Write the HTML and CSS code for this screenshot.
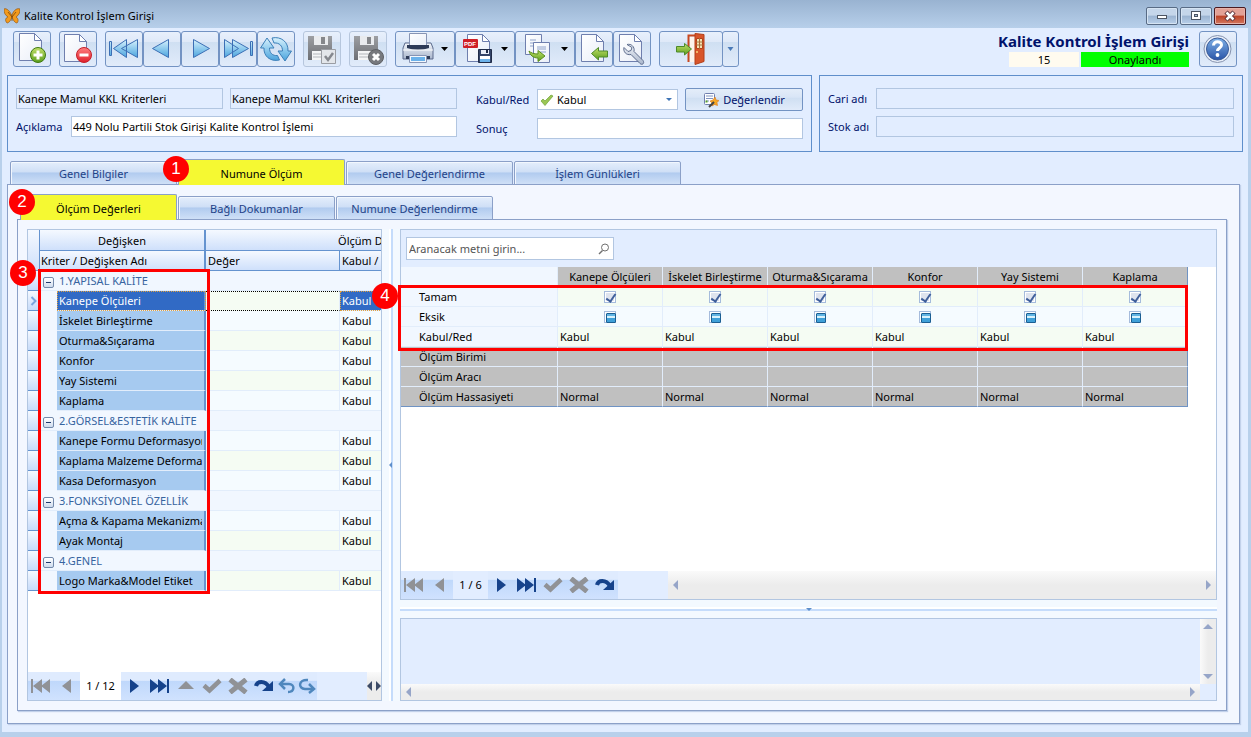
FILE: index.html
```html
<!DOCTYPE html>
<html lang="tr">
<head>
  <meta charset="UTF-8">
  <title>Kalite Kontrol İşlem Girişi</title>
  <meta name="viewport" content="width=device-width, initial-scale=1.0">
  <link rel="stylesheet" href="styles.css">
</head>
<body>

  <!-- shared gradients and symbols -->
  <svg class="defs" width="0" height="0" aria-hidden="true">
    <defs>
      <linearGradient id="g-blue" x1="0" y1="0" x2="0" y2="1"><stop offset="0" stop-color="#d8f1fc"/><stop offset=".5" stop-color="#8fcbee"/><stop offset="1" stop-color="#4ba3dc"/></linearGradient>
      <linearGradient id="g-page" x1="0" y1="0" x2="1" y2="1"><stop offset="0" stop-color="#ffffff"/><stop offset="1" stop-color="#e9eef8"/></linearGradient>
      <linearGradient id="g-green" x1="0" y1="0" x2="0" y2="1"><stop offset="0" stop-color="#c3e06a"/><stop offset="1" stop-color="#5a9e1c"/></linearGradient>
      <linearGradient id="g-red" x1="0" y1="0" x2="0" y2="1"><stop offset="0" stop-color="#ff7f7f"/><stop offset="1" stop-color="#e01f2b"/></linearGradient>
      <linearGradient id="g-gray" x1="0" y1="0" x2="0" y2="1"><stop offset="0" stop-color="#9d9fa3"/><stop offset="1" stop-color="#6d6f74"/></linearGradient>
      <linearGradient id="g-steel" x1="0" y1="0" x2="0" y2="1"><stop offset="0" stop-color="#f2f5fa"/><stop offset="1" stop-color="#a9b6cc"/></linearGradient>
      <linearGradient id="g-help" x1="0" y1="0" x2="0" y2="1"><stop offset="0" stop-color="#7fb0e6"/><stop offset="1" stop-color="#2a55a8"/></linearGradient>
    </defs>
    <symbol id="page" viewBox="0 0 23 28"><path d="M.5.5h15l7 7v20H.5z" fill="url(#g-page)" stroke="#6f7fae"/><path d="M15.500.5v7h7z" fill="#fff" stroke="#6f7fae"/></symbol>
    <symbol id="n-first" viewBox="0 0 20 16"><path d="M0 1h2v14H0zM11 1v14L2 8zM19 1v14l-9-7z" fill="currentColor"/></symbol>
    <symbol id="n-prev" viewBox="0 0 20 16"><path d="M14 1v14L5 8z" fill="currentColor"/></symbol>
    <symbol id="n-next" viewBox="0 0 20 16"><path d="M6 1v14l9-7z" fill="currentColor"/></symbol>
    <symbol id="n-last" viewBox="0 0 20 16"><path d="M17 1h2v14h-2zM0 1v14l9-7zM8 1v14l9-7z" fill="currentColor"/></symbol>
    <symbol id="n-up" viewBox="0 0 20 16"><path d="M10 3l8 8H2z" fill="currentColor"/></symbol>
    <symbol id="n-check" viewBox="0 0 20 16"><path d="M2 7.500l5.500 5L18 2.500" fill="none" stroke="currentColor" stroke-width="4.500"/></symbol>
    <symbol id="n-cross" viewBox="0 0 20 16"><path d="M2 1.500l16 13M18 1.500l-16 13" fill="none" stroke="currentColor" stroke-width="5"/></symbol>
    <symbol id="n-refresh" viewBox="0 0 20 16"><path d="M2 8c1-5 9-6 13 1" fill="none" stroke="currentColor" stroke-width="4"/><path d="M19 3v10H8z" fill="currentColor"/></symbol>
    <symbol id="n-undo" viewBox="0 0 20 16"><path d="M4 6h8c6 0 6 8-1 8" fill="none" stroke="currentColor" stroke-width="2.500"/><path d="M8 1L3 6l5 5" fill="none" stroke="currentColor" stroke-width="2.500"/></symbol>
    <symbol id="n-redo" viewBox="0 0 20 16"><path d="M11 2C1 1 1 11 8 11h9" fill="none" stroke="currentColor" stroke-width="2.500"/><path d="M12 6l5 5-5 4" fill="none" stroke="currentColor" stroke-width="2.500"/></symbol>
  </svg>

  <header class="titlebar">
    <svg class="app-icon" width="16" height="16" viewBox="0 0 16 16"><path d="M7.500 7C5 1 1 0 0 1c0 4 1 6 4 8-3 1-3 4-1 6 2 0 4-3 5-6 1 3 3 6 5 6 2-2 1-5-1-6 3-2 4-4 4-8-2-1-6 0-8 6z" fill="#f39a1c" stroke="#8a4a05" stroke-width=".6"/><path d="M4 4l4 5 4-5M8 7v6" fill="none" stroke="#6a3a05" stroke-width=".7"/></svg>
    <span class="window-title">Kalite Kontrol İşlem Girişi</span>
    <div class="window-buttons">
      <button class="win-btn" aria-label="Simge durumuna küçült"><svg width="12" height="12"><rect x="1.500" y="5.500" width="9" height="3" fill="#fff" stroke="#4c5563"/></svg></button>
      <button class="win-btn" aria-label="Önceki boyut"><svg width="12" height="12"><rect x="1.500" y="1.500" width="9" height="8" fill="#fff" stroke="#4c5563"/><rect x="4.500" y="4.500" width="3" height="2" fill="#a9bfd9" stroke="#4c5563"/></svg></button>
      <button class="win-btn win-close" aria-label="Kapat"><svg width="12" height="12"><path d="M2 2l8 8M10 2l-8 8" stroke="#5a3038" stroke-width="4.500"/><path d="M2.500 2.500l7 7M9.500 2.500l-7 7" stroke="#fff" stroke-width="2.500"/></svg></button>
    </div>
  </header>

  <main class="window">
    <div class="toolbar">
      <div class="tool-group">
        <button class="tool" aria-label="Yeni"><svg viewBox="0 0 38 36"><use href="#page" x="6" y="2" width="23" height="28"/><circle cx="25" cy="24" r="7.500" fill="url(#g-green)" stroke="#3f7a12"/><path d="M25 19.500v9M20.500 24h9" stroke="#fff" stroke-width="3"/></svg></button>
      </div>
      <div class="tool-group">
        <button class="tool" aria-label="Sil"><svg viewBox="0 0 38 36"><use href="#page" x="5" y="3" width="23" height="28"/><circle cx="25" cy="24" r="7.500" fill="url(#g-red)" stroke="#c4202a"/><path d="M20.500 24h9" stroke="#fff" stroke-width="3"/></svg></button>
      </div>
      <div class="tool-group">
        <button class="tool" aria-label="İlk"><svg viewBox="0 0 38 36"><g fill="url(#g-blue)" stroke="#3c6fb5"><path d="M4.500 10.500h2v14h-2zM21.500 8.500v18l-13-9zM32.500 8.500v18l-16-9z"/></g></svg></button>
        <button class="tool" aria-label="Önceki"><svg viewBox="0 0 38 36"><path d="M25.500 8.500v18l-16-9z" fill="url(#g-blue)" stroke="#3c6fb5"/></svg></button>
        <button class="tool" aria-label="Sonraki"><svg viewBox="0 0 38 36"><path d="M12.500 8.500v18l16-9z" fill="url(#g-blue)" stroke="#3c6fb5"/></svg></button>
        <button class="tool" aria-label="Son"><svg viewBox="0 0 38 36"><g fill="url(#g-blue)" stroke="#3c6fb5"><path d="M31.500 10.500h2v14h-2zM5.500 8.500v18l14-9zM13.500 8.500v18l16-9z"/></g></svg></button>
        <button class="tool" aria-label="Yenile"><svg viewBox="0 0 38 36"><g fill="url(#g-blue)" stroke="#3c7fb8"><path d="M10 7l7 10h-4.500c0 5 3 8 8 7.500l2 4.500C13 31 6.500 25 7 17H3.500z"/><path d="M28 30l-7-10h4.500c0-5-3-8.500-8.500-8l-2-5c9-2 16.500 4 16 13h3.500z"/></g></svg></button>
      </div>
      <div class="tool-group">
        <button class="tool" disabled aria-label="Kaydet ve onayla"><svg viewBox="0 0 38 36"><path d="M5 5h24v24H5z" fill="url(#g-gray)"/><path d="M11 5h14v9H11z" fill="#e9ebee"/><path d="M18 6h4v7h-4z" fill="#85878b"/><path d="M9 20h17v9H9z" fill="#f4f5f6"/><path d="M10 23h14M10 26h14" stroke="#b4b7bc"/><path d="M18.500 18.500h14v14h-14z" fill="#e3e6ea" stroke="#9a9da3"/><path d="M22 25l3 4 5-7" fill="none" stroke="#85888e" stroke-width="2.500"/></svg></button>
      </div>
      <div class="tool-group">
        <button class="tool" disabled aria-label="Kaydet ve kapat"><svg viewBox="0 0 38 36"><path d="M5 5h24v24H5z" fill="url(#g-gray)"/><path d="M11 5h14v9H11z" fill="#e9ebee"/><path d="M18 6h4v7h-4z" fill="#85878b"/><path d="M9 20h17v9H9z" fill="#f4f5f6"/><path d="M10 23h14M10 26h14" stroke="#b4b7bc"/><circle cx="27" cy="26" r="7.500" fill="#77797d" stroke="#5e6064"/><path d="M24 23l6 6M30 23l-6 6" stroke="#fff" stroke-width="3"/></svg></button>
      </div>
      <div class="tool-group">
        <button class="tool tool-wide" aria-label="Yazdır"><svg viewBox="0 0 60 36"><path d="M10 12h26l2 5v11H8V17z" fill="url(#g-steel)" stroke="#5c6b8c"/><path d="M14.500 2.500h17v12h-17z" fill="url(#g-page)" stroke="#8794b4"/><path d="M12 14h22v3q-11 4-22 0z" fill="#2e3b57"/><path d="M8 19h30" stroke="#fff"/><path d="M11 25h24v3H11z" fill="#2e3b57"/><path d="M14.500 24.500h17v7h-17z" fill="#f4f8fd" stroke="#8794b4"/><path d="M16 26h14v4H16z" fill="#6cb2ea"/><path d="M46 16h7l-3.500 4z" fill="#000"/></svg></button>
        <button class="tool tool-wide" aria-label="PDF kaydet"><svg viewBox="0 0 60 36"><use href="#page" x="12" y="3" width="23" height="28"/><rect x="8" y="8" width="15" height="9" rx="1" fill="#cf1f27"/><text x="9" y="15" class="pdf-text">PDF</text><path d="M23.500 18.500h13v13h-13z" fill="#344468" stroke="#202c48"/><path d="M26 19h8v4h-8z" fill="#e8edf6"/><path d="M31 19h2v3h-2z" fill="#202c48"/><path d="M25 25h10v6H25z" fill="#fff"/><path d="M25 28h10v3H25z" fill="#6cb2ea"/><path d="M46 16h7l-3.500 4z" fill="#000"/></svg></button>
        <button class="tool tool-wide" aria-label="Kopyala"><svg viewBox="0 0 60 36"><path d="M10.500 3.500h16v20h-16z" fill="url(#g-page)" stroke="#6f7fae"/><path d="M15 9h6M15 12h6M15 15h6" stroke="#8fa2cb"/><path d="M18.500 11.500h16v20h-16z" fill="url(#g-page)" stroke="#6f7fae"/><path d="M22 16h9M22 18h9M25 21h6" stroke="#8fa2cb"/><path d="M14 20c2 2 5 3 9 3v-3.500l7 5.500-7 5.500V27c-5 0-8-3-9-7z" fill="url(#g-green)" stroke="#5a8e1c"/><path d="M46 16h7l-3.500 4z" fill="#000"/></svg></button>
        <button class="tool" aria-label="İçe aktar"><svg viewBox="0 0 38 36"><use href="#page" x="6" y="3" width="23" height="28"/><path d="M16.500 22.500l7-6v3.500h9v6h-9v3z" fill="url(#g-green)" stroke="#4c8a2a"/></svg></button>
        <button class="tool" aria-label="Ayarlar"><svg viewBox="0 0 38 36"><use href="#page" x="6" y="3" width="23" height="28"/><path d="M14 13.500c4-1 8 2 7 7l9 9c2 3-1 5-3 3l-9-9c-5 1-8-3-7-7l4 4 3-1 1-3z" fill="url(#g-steel)" stroke="#5c6b8c"/></svg></button>
      </div>
      <div class="tool-group">
        <button class="tool tool-exit" aria-label="Çıkış"><svg viewBox="0 0 64 36"><path d="M29.500 31V4.500H37" fill="none" stroke="#c9481f" stroke-width="2"/><path d="M31 6h5v25h-5z" fill="#fdf3ec"/><path d="M36 2.500l9 1v27l-9 3z" fill="#d8552a" stroke="#b43f18"/><path d="M37.500 7.500h6v10h-6z" fill="#f3e3b4" stroke="#b43f18"/><path d="M40.500 7v11M37 11h7M37 14h7" stroke="#a9713a"/><circle cx="38" cy="21" r="1" fill="#fbd07a"/><path d="M17.500 15.500h8v-3l7 5.500-7 6v-3h-8z" fill="url(#g-green)" stroke="#4c8a2a"/></svg></button>
        <button class="tool tool-drop" aria-label="Çıkış seçenekleri"><svg viewBox="0 0 16 36"><path d="M5 16h6l-3 4z" fill="#4a7ab8"/></svg></button>
      </div>

      <div class="doc-info">
        <h1 class="doc-title">Kalite Kontrol İşlem Girişi</h1>
        <div class="doc-status">
          <span class="doc-no">15</span>
          <span class="doc-state">Onaylandı</span>
        </div>
      </div>
      <button class="tool" aria-label="Yardım"><svg viewBox="0 0 38 36"><circle cx="18.500" cy="18" r="13.500" fill="#e8eef8" stroke="#8592ae"/><circle cx="18.500" cy="18" r="11" fill="url(#g-help)" stroke="#3a5b98"/><path d="M14.500 14.500c0-5 8-5 8-.5 0 3-4 3-4 6" fill="none" stroke="#fff" stroke-width="3"/><circle cx="18.500" cy="24" r="1.900" fill="#fff"/></svg></button>
    </div>

    <div class="panels">
      <section class="panel panel-main">
        <div class="form-left">
          <div class="form-row">
            <input class="field readonly plan-code" type="text" value="Kanepe Mamul KKL Kriterleri" aria-label="Plan kodu" readonly>
            <input class="field readonly" type="text" value="Kanepe Mamul KKL Kriterleri" aria-label="Plan adı" readonly>
          </div>
          <div class="form-row">
            <label class="label-desc" for="aciklama">Açıklama</label>
            <input class="field" id="aciklama" type="text" value="449 Nolu Partili Stok Girişi Kalite Kontrol İşlemi">
          </div>
        </div>
        <div class="form-right">
          <div class="form-row">
            <label class="label-result" for="kabul">Kabul/Red</label>
            <div class="select-box">
              <svg width="14" height="12" viewBox="0 0 14 12"><path d="M1 7l2-2 2 2 6-6 2 1-8 9.500z" fill="#9bc653" stroke="#6ea23a" stroke-width=".7"/></svg>
              <select class="field" id="kabul"><option>Kabul</option><option>Red</option></select>
            </div>
            <button class="btn"><svg width="16" height="16" viewBox="0 0 16 16"><rect x="1.500" y="1.500" width="10" height="11" rx="1" fill="#fff" stroke="#6f7fae"/><path d="M3 4h7M3 6.500h7M3 9h3" stroke="#7f93c0"/><path d="M2.500 9.500h2" stroke="#5aa02c" stroke-width="2"/><path d="M12 5l1 3 3 .5-2 2 .5 3-3-1-2.500 1.500V11L7 9l3-1z" fill="#f7a823" stroke="#d8741a" stroke-width=".6"/><path d="M11 10l-5 5" stroke="#444" stroke-width="2"/></svg>Değerlendir</button>
          </div>
          <div class="form-row">
            <label class="label-result" for="sonuc">Sonuç</label>
            <input class="field" id="sonuc" type="text">
          </div>
        </div>
      </section>
      <section class="panel panel-account">
        <div class="form-row">
          <label class="label-account" for="cari">Cari adı</label>
          <input class="field readonly" id="cari" type="text" readonly>
        </div>
        <div class="form-row">
          <label class="label-account" for="stok">Stok adı</label>
          <input class="field readonly" id="stok" type="text" readonly>
        </div>
      </section>
    </div>

    <nav class="tabs" role="tablist">
      <button class="tab" role="tab">Genel Bilgiler</button>
      <button class="tab active" role="tab" aria-selected="true">Numune Ölçüm</button>
      <button class="tab" role="tab">Genel Değerlendirme</button>
      <button class="tab" role="tab">İşlem Günlükleri</button>
      <span class="badge badge-1">1</span>
    </nav>

    <div class="tab-page">
      <nav class="tabs subtabs" role="tablist">
        <button class="tab active" role="tab" aria-selected="true">Ölçüm Değerleri</button>
        <button class="tab" role="tab">Bağlı Dokumanlar</button>
        <button class="tab" role="tab">Numune Değerlendirme</button>
        <span class="badge badge-2">2</span>
      </nav>

      <div class="tab-page subpage">
        <div class="criteria">
          <div class="grid-view">
            <table class="criteria-table">
              <colgroup><col class="c-mark"><col class="c-indent"><col class="c-name"><col class="c-value"><col class="c-accept"><col class="c-rest"></colgroup>
              <thead>
                <tr class="bands"><th class="mark" rowspan="2"></th><th class="center edge" colspan="2">Değişken</th><th class="center" colspan="3">Ölçüm Değerleri</th></tr>
                <tr><th class="edge tight" colspan="2">Kriter / Değişken Adı</th><th>Değer</th><th>Kabul / Red</th><th></th></tr>
              </thead>
              <tbody>
                <tr class="group"><td class="mark"></td><td colspan="5"><button class="collapse" aria-label="Daralt"></button>1.YAPISAL KALİTE</td></tr>
                <tr class="selected"><td class="mark"><svg width="8" height="10" viewBox="0 0 8 10"><path d="M1.500 1l4 4-4 4" fill="none" stroke="#7aa5dd" stroke-width="2"/></svg></td><td class="indent"></td><td class="name"><span>Kanepe Ölçüleri</span></td><td class="value"></td><td class="accept">Kabul</td><td></td></tr>
                <tr><td class="mark"></td><td class="indent"></td><td class="name"><span>İskelet Birleştirme</span></td><td></td><td>Kabul</td><td></td></tr>
                <tr><td class="mark"></td><td class="indent"></td><td class="name"><span>Oturma&amp;Sıçarama</span></td><td></td><td>Kabul</td><td></td></tr>
                <tr><td class="mark"></td><td class="indent"></td><td class="name"><span>Konfor</span></td><td></td><td>Kabul</td><td></td></tr>
                <tr><td class="mark"></td><td class="indent"></td><td class="name"><span>Yay Sistemi</span></td><td></td><td>Kabul</td><td></td></tr>
                <tr><td class="mark"></td><td class="indent"></td><td class="name"><span>Kaplama</span></td><td></td><td>Kabul</td><td></td></tr>
                <tr class="group"><td class="mark"></td><td colspan="5"><button class="collapse" aria-label="Daralt"></button>2.GÖRSEL&amp;ESTETİK KALİTE</td></tr>
                <tr><td class="mark"></td><td class="indent"></td><td class="name"><span>Kanepe Formu Deformasyonu</span></td><td></td><td>Kabul</td><td></td></tr>
                <tr><td class="mark"></td><td class="indent"></td><td class="name"><span>Kaplama Malzeme Deformasyonu</span></td><td></td><td>Kabul</td><td></td></tr>
                <tr><td class="mark"></td><td class="indent"></td><td class="name"><span>Kasa Deformasyon</span></td><td></td><td>Kabul</td><td></td></tr>
                <tr class="group"><td class="mark"></td><td colspan="5"><button class="collapse" aria-label="Daralt"></button>3.FONKSİYONEL ÖZELLİK</td></tr>
                <tr><td class="mark"></td><td class="indent"></td><td class="name"><span>Açma &amp; Kapama Mekanizması</span></td><td></td><td>Kabul</td><td></td></tr>
                <tr><td class="mark"></td><td class="indent"></td><td class="name"><span>Ayak Montaj</span></td><td></td><td>Kabul</td><td></td></tr>
                <tr class="group"><td class="mark"></td><td colspan="5"><button class="collapse" aria-label="Daralt"></button>4.GENEL</td></tr>
                <tr><td class="mark"></td><td class="indent"></td><td class="name"><span>Logo Marka&amp;Model Etiket</span></td><td></td><td>Kabul</td><td></td></tr>
              </tbody>
            </table>
            <div class="navigator">
              <div class="nav-buttons">
                <button class="nav-btn off" aria-label="İlk"><svg><use href="#n-first"/></svg></button>
                <button class="nav-btn off" aria-label="Önceki"><svg><use href="#n-prev"/></svg></button>
                <span class="nav-pos nav-pos-left">1 / 12</span>
                <button class="nav-btn" aria-label="Sonraki"><svg><use href="#n-next"/></svg></button>
                <button class="nav-btn" aria-label="Son"><svg><use href="#n-last"/></svg></button>
                <button class="nav-btn off" aria-label="Düzenle"><svg><use href="#n-up"/></svg></button>
                <button class="nav-btn off" aria-label="Onayla"><svg><use href="#n-check"/></svg></button>
                <button class="nav-btn off" aria-label="İptal"><svg><use href="#n-cross"/></svg></button>
                <button class="nav-btn" aria-label="Yenile"><svg><use href="#n-refresh"/></svg></button>
                <button class="nav-btn small" aria-label="Geri al"><svg><use href="#n-undo"/></svg></button>
                <button class="nav-btn small" aria-label="Yinele"><svg><use href="#n-redo"/></svg></button>
              </div>
              <div class="mini-scroll"><i class="arrow left dark"></i><i class="arrow right dark"></i></div>
            </div>
          </div>
          <div class="frame frame-criteria"></div>
          <span class="badge badge-3">3</span>
        </div>

        <div class="splitter-v"><i class="arrow left tiny"></i></div>

        <div class="samples">
          <div class="sample-view">
            <div class="search-row">
              <div class="search">
                <input class="field" type="search" placeholder="Aranacak metni girin..." aria-label="Ara">
                <svg width="12" height="12" viewBox="0 0 12 12"><circle cx="7" cy="4.500" r="3.500" fill="none" stroke="#707070"/><path d="M4.500 7.500L1 11" stroke="#707070" stroke-width="1.500"/></svg>
              </div>
            </div>
            <div class="sample-body">
              <table class="sample-table">
                <colgroup><col class="s-name"><col span="6" class="s-col"></colgroup>
                <thead>
                  <tr><th class="blank"></th><th>Kanepe Ölçüleri</th><th>İskelet Birleştirme</th><th>Oturma&amp;Sıçarama</th><th>Konfor</th><th>Yay Sistemi</th><th>Kaplama</th></tr>
                </thead>
                <tbody>
                  <tr class="check-row"><th>Tamam</th><td><input type="checkbox" checked aria-label="Tamam"></td><td><input type="checkbox" checked aria-label="Tamam"></td><td><input type="checkbox" checked aria-label="Tamam"></td><td><input type="checkbox" checked aria-label="Tamam"></td><td><input type="checkbox" checked aria-label="Tamam"></td><td><input type="checkbox" checked aria-label="Tamam"></td></tr>
                  <tr class="check-row partial"><th>Eksik</th><td><input type="checkbox" aria-label="Eksik"></td><td><input type="checkbox" aria-label="Eksik"></td><td><input type="checkbox" aria-label="Eksik"></td><td><input type="checkbox" aria-label="Eksik"></td><td><input type="checkbox" aria-label="Eksik"></td><td><input type="checkbox" aria-label="Eksik"></td></tr>
                  <tr><th>Kabul/Red</th><td>Kabul</td><td>Kabul</td><td>Kabul</td><td>Kabul</td><td>Kabul</td><td>Kabul</td></tr>
                  <tr class="gray"><th>Ölçüm Birimi</th><td></td><td></td><td></td><td></td><td></td><td></td></tr>
                  <tr class="gray"><th>Ölçüm Aracı</th><td></td><td></td><td></td><td></td><td></td><td></td></tr>
                  <tr class="gray last"><th>Ölçüm Hassasiyeti</th><td>Normal</td><td>Normal</td><td>Normal</td><td>Normal</td><td>Normal</td><td>Normal</td></tr>
                </tbody>
              </table>
              <div class="frame frame-samples"></div>
              <span class="badge badge-4">4</span>
            </div>
            <div class="navigator">
              <div class="nav-buttons">
                <button class="nav-btn off" aria-label="İlk"><svg><use href="#n-first"/></svg></button>
                <button class="nav-btn off" aria-label="Önceki"><svg><use href="#n-prev"/></svg></button>
                <span class="nav-pos nav-pos-right">1 / 6</span>
                <button class="nav-btn" aria-label="Sonraki"><svg><use href="#n-next"/></svg></button>
                <button class="nav-btn" aria-label="Son"><svg><use href="#n-last"/></svg></button>
                <button class="nav-btn off" aria-label="Onayla"><svg><use href="#n-check"/></svg></button>
                <button class="nav-btn off" aria-label="İptal"><svg><use href="#n-cross"/></svg></button>
                <button class="nav-btn" aria-label="Yenile"><svg><use href="#n-refresh"/></svg></button>
              </div>
              <div class="scroll-h wide"><i class="arrow left"></i><i class="arrow right"></i></div>
            </div>
          </div>

          <div class="splitter-h"><i class="arrow down tiny"></i></div>

          <div class="memo">
            <div class="memo-text"></div>
            <div class="scroll-v"><i class="arrow up"></i><i class="arrow down"></i></div>
            <div class="scroll-h"><i class="arrow left"></i><i class="arrow right"></i></div>
          </div>
        </div>
      </div>
    </div>
  </main>

  <script>
    document.querySelectorAll('.partial input').forEach(box => {
      box.indeterminate = true;
    });
  </script>
</body>
</html>
```
FILE: styles.css
```css
* {
  box-sizing: border-box;
}

body {
  margin: 0;
  height: 100vh;
  min-height: 640px;
  display: flex;
  flex-direction: column;
  background: #b8d0eb;
  font-family: "Noto Sans", "Open Sans", sans-serif;
  font-size: 11px;
  line-height: 16px;
  color: #000;
}

button, input, select {
  font: inherit;
  color: inherit;
  margin: 0;
}

button {
  padding: 0;
}

svg {
  display: block;
}

.defs {
  position: absolute;
}

/* title bar */
.titlebar {
  height: 28px;
  flex: none;
  display: flex;
  align-items: center;
  gap: 4px;
  padding: 4px 5px 0 4px;
  background: linear-gradient(#99b3d1, #b7cfea);
}

.window-title {
  flex: 1;
}

.window-buttons {
  display: flex;
  gap: 2px;
}

.win-btn {
  width: 32px;
  height: 18px;
  display: flex;
  align-items: center;
  justify-content: center;
  border: 1px solid #586b85;
  border-radius: 2px;
  background: linear-gradient(#c5d6ea 45%, #9bb4d1 50%, #b9d0ea);
  box-shadow: inset 0 0 0 1px #d6e4f3;
}

.win-close {
  border-color: #4b1a20;
  background: linear-gradient(#e3a196 45%, #bc4126 50%, #d4785f);
  box-shadow: inset 0 0 0 1px #e8b2a8;
}

.window {
  flex: 1;
  min-height: 0;
  display: flex;
  flex-direction: column;
  margin: 0 3px 5px 2px;
  padding: 0 5px 8px;
  background: #e2edff;
}

/* toolbar */
.toolbar {
  height: 47px;
  display: flex;
  align-items: flex-start;
  gap: 8px;
  padding: 3px 6px 0;
}

.tool-group {
  display: flex;
}

.tool {
  width: 38px;
  height: 36px;
  border: 1px solid #7393c3;
  border-radius: 3px;
  background: linear-gradient(#e8f0fc, #dfe9f8 28%, #cfdff2 30%, #e1ebfa);
}

.tool svg {
  width: calc(100% + 2px);
  height: 36px;
  margin: -1px;
}

.tool:disabled {
  border-color: #b6c6dd;
}

.tool-wide {
  width: 60px;
}

.tool-exit {
  width: 64px;
}

.tool-drop {
  width: 17px;
  margin-left: -1px;
}

.pdf-text {
  font: bold 6px "Liberation Sans", sans-serif;
  fill: #fff;
}

.doc-info {
  margin-left: auto;
  margin-right: 2px;
}

.doc-title {
  margin: 0;
  font-size: 15px;
  line-height: 21px;
  color: #00126b;
}

.doc-status {
  display: flex;
  justify-content: flex-end;
  gap: 2px;
  line-height: 15px;
  text-align: center;
}

.doc-no {
  width: 70px;
  background: #fffbef;
}

.doc-state {
  width: 108px;
  background: #00ff00;
}

/* header form */
.panels {
  display: flex;
  gap: 7px;
}

.panel {
  height: 77px;
  padding: 12px 8px 0;
  border: 1px solid #5f8fcb;
}

.panel-main {
  flex: 787 1 0;
  display: flex;
  gap: 19px;
}

.panel-account {
  flex: 406 1 0;
}

.form-left {
  flex: 1;
}

.form-right {
  width: 327px;
}

.form-row {
  display: flex;
  align-items: center;
  height: 21px;
  margin-bottom: 7px;
  color: #00126b;
}

.form-right .form-row {
  height: 23px;
  margin-bottom: 6px;
}

.field {
  flex: 1;
  min-width: 0;
  width: 100%;
  height: 21px;
  padding: 0 1px;
  border: 1px solid #b2c6e1;
  border-radius: 0;
  background: #fff;
  color: #000;
}

.field:focus {
  outline: none;
  border-color: #5f8fcb;
}

.readonly {
  background: #e2edff;
}

.plan-code {
  flex: none;
  width: 207px;
  margin-right: 7px;
}

.label-desc {
  width: 55px;
}

.label-result {
  width: 61px;
}

.label-account {
  width: 48px;
}

.select-box {
  position: relative;
  width: 141px;
  margin-right: 7px;
}

.select-box svg {
  position: absolute;
  left: 3px;
  top: 5px;
}

.select-box select {
  appearance: none;
  display: block;
  padding-left: 19px;
}

.select-box::after {
  content: "";
  position: absolute;
  right: 6px;
  top: 9px;
  border: 3px solid transparent;
  border-top-color: #3f74b5;
  border-bottom: 0;
}

.btn {
  flex: 1;
  height: 23px;
  display: flex;
  align-items: center;
  justify-content: center;
  gap: 4px;
  border: 1px solid #7393c3;
  border-radius: 2px;
  background: linear-gradient(#e4edf9, #d8e5f6 40%, #cfdff2 42%, #e1ebfa);
}

/* tabs */
.tabs {
  position: relative;
  z-index: 1;
  display: flex;
  align-items: flex-end;
  gap: 1px;
  height: 26px;
  margin: 7px 0 -1px;
  padding: 0 3px;
}

.tab {
  width: 167px;
  height: 24px;
  padding-top: 2px;
  border: 1px solid #8ba0c8;
  border-radius: 2px 2px 0 0;
  background: linear-gradient(#e4eefc, #cfdff6 45%, #b1cbef 50%, #cfe0f7);
  box-shadow: inset 1px 1px 0 #f2f7fe;
  color: #1e4287;
}

.tab.active {
  height: 26px;
  border-bottom: 0;
  background: #f5f932;
  box-shadow: none;
  color: #000;
}

.tab-page {
  flex: 1;
  min-height: 0;
  display: flex;
  flex-direction: column;
  margin-right: 3px;
  padding: 9px 12px 12px 9px;
  border: 1px solid #8ba0c8;
  background: #f3f7ff;
  box-shadow: 1px 1px 1px #c2d1ea;
}

.subtabs {
  margin-top: 0;
}

.subtabs .tab {
  width: 157px;
}

.subpage {
  flex-direction: row;
  margin-right: 0;
  padding: 9px;
}

/* red annotations */
.badge {
  position: absolute;
  z-index: 3;
  width: 26px;
  height: 26px;
  border-radius: 50%;
  background: #f00;
  color: #fff;
  font: 17px/26px "Liberation Sans", sans-serif;
  text-align: center;
}

.badge-1 { left: 156px; top: -3px; }
.badge-2 { left: -8px; top: -5px; }
.badge-3 { left: -17px; top: 31px; }
.badge-4 { left: -29px; top: 16px; }

.frame {
  position: absolute;
  z-index: 2;
  border: 3px solid #f00;
  pointer-events: none;
}

.frame-criteria {
  left: 11px;
  top: 40px;
  width: 172px;
  height: 325px;
}

.frame-samples {
  left: -3px;
  top: 18px;
  width: 790px;
  height: 66px;
}

/* criteria grid */
.criteria {
  position: relative;
  width: 355px;
  display: flex;
}

.grid-view {
  flex: 1;
  min-width: 0;
  display: flex;
  flex-direction: column;
  overflow: hidden;
  border: 1px solid #b2c6e1;
  background: #fff;
}

table {
  table-layout: fixed;
  border-collapse: separate;
  border-spacing: 0;
}

th, td {
  height: 20px;
  padding: 0 2px;
  line-height: 19px;
  text-align: left;
  font-weight: normal;
  white-space: nowrap;
}

.criteria-table {
  width: 528px;
}

.c-mark { width: 12px; }
.c-indent { width: 17px; }
.c-name { width: 149px; }
.c-value { width: 134px; }
.c-accept { width: 60px; }
.c-rest { width: 156px; }

.criteria-table thead th {
  border-right: 1px solid #6593cf;
  border-bottom: 1px solid #6593cf;
  background: linear-gradient(#f5f9ff, #cfe0fb);
}

.criteria-table .bands th {
  height: 21px;
}

.criteria-table .center {
  text-align: center;
}

.criteria-table thead .edge {
  border-right-width: 2px;
}

.criteria-table .tight {
  padding-left: 1px;
}

.criteria-table tbody td {
  border-right: 1px solid #e2edfb;
  border-bottom: 1px solid #e2edfb;
  background: #f5fbff;
}

.criteria-table tbody tr:nth-child(even) td {
  background: #f5fcf3;
}

.criteria-table tbody .mark {
  padding: 0 0 0 2px;
  border-right: 1px solid #a9c2e6;
  border-bottom: 1px solid #6593cf;
}

.criteria-table tbody tr .mark,
.criteria-table tbody tr:nth-child(even) .mark {
  background: linear-gradient(#f5f9ff, #c6dbfa);
}

.criteria-table tbody .indent,
.criteria-table tbody tr:nth-child(even) .indent {
  border-bottom-color: #f1f7ff;
  border-right: 0;
  background: #f1f7ff;
}

.criteria-table tbody .name,
.criteria-table tbody tr:nth-child(even) .name {
  border-right: 2px solid #6593cf;
  background: #a6caf0;
}

.name span {
  display: block;
  overflow: hidden;
}

.criteria-table tbody tr.group td:not(.mark) {
  background: #f1f7ff;
  color: #3764a0;
}

.criteria-table tbody tr.selected .name,
.criteria-table tbody tr.selected .accept {
  background: #316ac5;
  color: #fff;
  outline: 1px dotted #e0a040;
  outline-offset: -1px;
}

.criteria-table tbody tr.selected .value {
  border-top: 1px dotted #000;
  border-bottom: 1px dotted #000;
}

.collapse {
  position: relative;
  width: 11px;
  height: 11px;
  margin: 0 5px 0 1px;
  border: 1px solid #7389ab;
  border-radius: 2px;
  background: linear-gradient(#fff, #cfdcee);
  vertical-align: -2px;
}

.collapse::after {
  content: "";
  position: absolute;
  left: 2px;
  top: 4px;
  width: 5px;
  height: 1px;
  background: #1e3a6e;
}

/* record navigator */
.navigator {
  height: 28px;
  flex: none;
  display: flex;
  margin-top: auto;
  background: #e2edff;
}

.nav-buttons {
  display: flex;
  background: linear-gradient(#dfebfe 30%, #bfd8fb 32%, #d0e2fe);
}

.nav-btn {
  width: 26px;
  display: flex;
  align-items: center;
  justify-content: center;
  border: 0;
  background: none;
  color: #15428b;
}

.nav-btn.off {
  color: #909296;
}

.nav-btn.small {
  width: 20px;
  color: #4f87bd;
}

.nav-btn svg {
  width: 20px;
  height: 16px;
}

.nav-pos {
  line-height: 28px;
  text-align: center;
}

.nav-pos-left {
  width: 41px;
  background: #fff;
}

.nav-pos-right {
  width: 35px;
  background: #e2edff;
}

.arrow {
  width: 0;
  height: 0;
  border: 5px solid transparent;
  color: #96a5c8;
}

.arrow.left { border-left: 0; border-right-color: currentColor; }
.arrow.right { border-right: 0; border-left-color: currentColor; }
.arrow.up { border-top: 0; border-bottom-color: currentColor; }
.arrow.down { border-bottom: 0; border-top-color: currentColor; }
.arrow.dark { color: #3d4b66; }
.arrow.tiny { border-width: 3px; color: #5f8fcb; }
.arrow.left.tiny { border-left: 0; }
.arrow.down.tiny { border-bottom: 0; }

.mini-scroll {
  width: 14px;
  margin-left: auto;
  display: flex;
  align-items: center;
  justify-content: space-between;
  background: linear-gradient(#fafafa, #ececec 40%);
}

.scroll-h {
  display: flex;
  align-items: center;
  justify-content: space-between;
  padding: 0 5px;
  background: linear-gradient(#fafafa, #ececec 50%);
}

.scroll-h.wide {
  flex: 1;
  margin-left: 50px;
}

.scroll-v {
  display: flex;
  flex-direction: column;
  align-items: center;
  justify-content: space-between;
  padding: 5px 0;
  background: linear-gradient(90deg, #fafafa, #ececec 50%);
}

.splitter-v {
  width: 18px;
  flex: none;
  display: flex;
  align-items: center;
  padding-left: 7px;
  background: linear-gradient(90deg, #f3f9ff 7px, #fff 7px 9px, #c5dcfb 9px 11px, #f3f9ff 11px);
}

.splitter-h {
  height: 18px;
  flex: none;
  display: flex;
  justify-content: center;
  padding-top: 8px;
  background: linear-gradient(#f3f9ff 7px, #fff 7px 9px, #c5dcfb 9px 11px, #f3f9ff 11px);
}

/* sample grid */
.samples {
  flex: 1;
  min-width: 0;
  display: flex;
  flex-direction: column;
}

.sample-view {
  flex: 1;
  display: flex;
  flex-direction: column;
  border: 1px solid #b2c6e1;
  background: #fff;
}

.search-row {
  height: 37px;
  padding: 7px 5px;
  background: #e2edff;
}

.search {
  position: relative;
  width: 208px;
}

.search input {
  display: block;
  height: 23px;
  padding: 0 20px 0 2px;
  appearance: none;
}

.search input::placeholder {
  color: #555;
}

.search svg {
  position: absolute;
  right: 4px;
  top: 6px;
}

.sample-body {
  position: relative;
}

.sample-table {
  width: 787px;
}

.s-name {
  width: 157px;
}

.s-col {
  width: 105px;
}

.sample-table th,
.sample-table td {
  border-right: 1px solid #e2edfb;
  border-bottom: 1px solid #e2edfb;
}

.sample-table th:last-child,
.sample-table td:last-child {
  border-right-color: #6f93c4;
}

.sample-table thead th {
  text-align: center;
  background: #c0c0c0;
  padding: 0;
}

.sample-table thead .blank {
  background: #f1f7ff;
}

.sample-table tbody th {
  padding-left: 18px;
  background: #f1f7ff;
}

.sample-table tbody td {
  background: #f5fcf3;
}

.sample-table tbody .partial td {
  background: #f5fbff;
}

.sample-table tbody .gray th,
.sample-table tbody .gray td {
  background: #c0c0c0;
}

.sample-table tbody .last th,
.sample-table tbody .last td {
  border-bottom-color: #6f93c4;
}

input[type="checkbox"] {
  appearance: none;
  position: relative;
  display: block;
  width: 12px;
  height: 12px;
  margin: 0 auto;
  border: 1px solid #a5bbdc;
  background: #fff;
  box-shadow: inset 0 0 0 1px #fff, inset 0 0 0 6px #dfe4ee;
}

input[type="checkbox"]:checked::after {
  content: "";
  position: absolute;
  left: 3px;
  top: 0;
  width: 4px;
  height: 8px;
  border: solid #3f5f9a;
  border-width: 0 2px 2px 0;
  transform: rotate(35deg);
}

input[type="checkbox"]:indeterminate {
  box-shadow: none;
}

input[type="checkbox"]:indeterminate::after {
  content: "";
  position: absolute;
  left: 1px;
  top: 1px;
  width: 8px;
  height: 8px;
  border: 1px solid #1b5f93;
  border-radius: 1px;
  background: linear-gradient(#5fb4e3 2px, #d8f2fd 2px 4px, #3fa0d8 4px);
}

/* notes box */
.memo {
  height: 83px;
  flex: none;
  display: grid;
  grid-template-columns: 1fr 16px;
  grid-template-rows: 1fr 16px;
  border: 1px solid #b2c6e1;
  background: #e2edff;
}
```
